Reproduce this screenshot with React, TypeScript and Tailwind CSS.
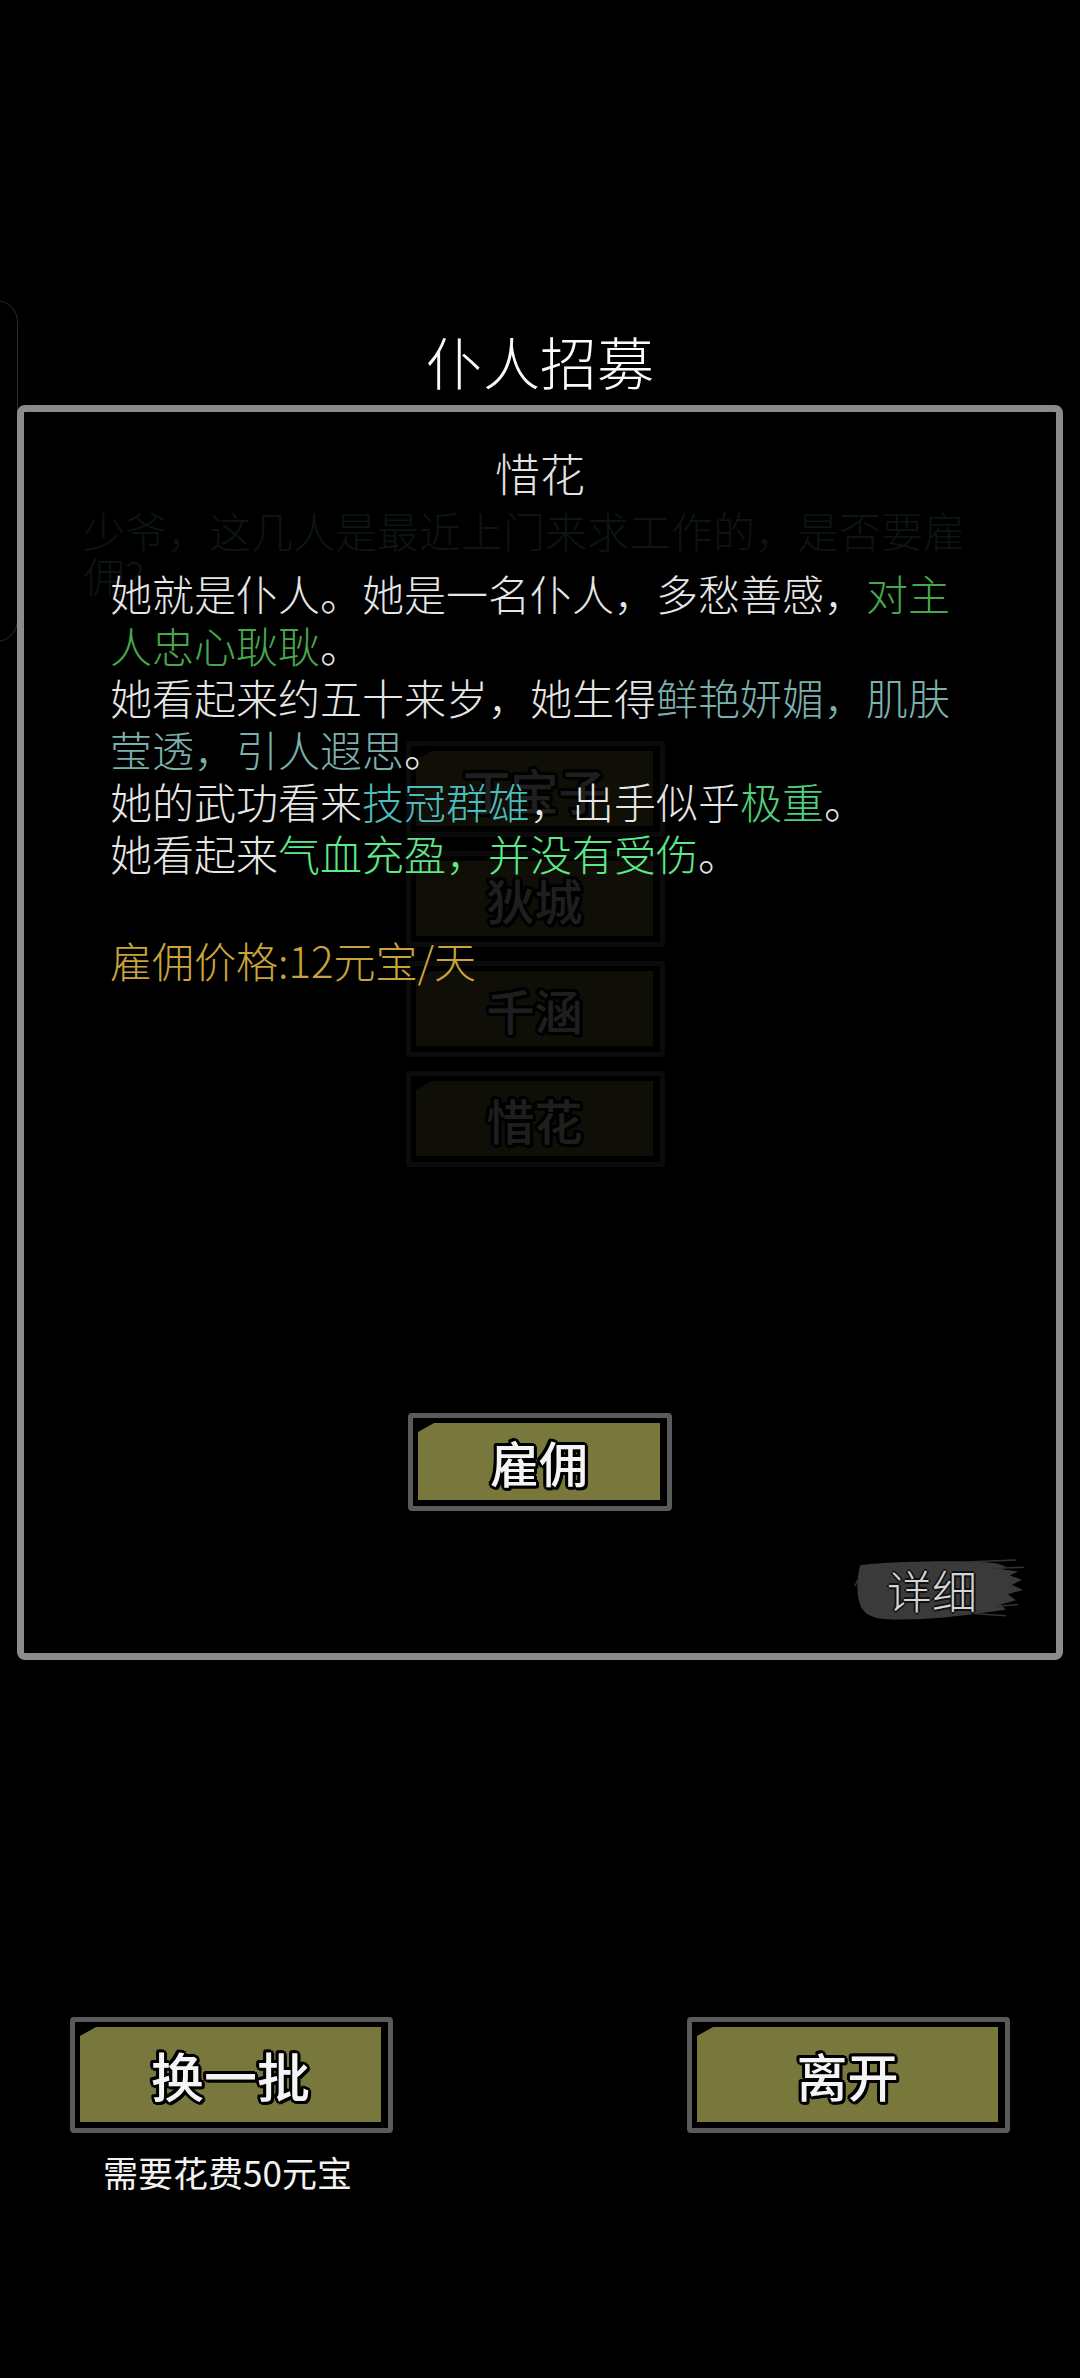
import React from 'react';

const OUTLINE =
  '[text-shadow:3px_0_0_#000,-3px_0_0_#000,0_3px_0_#000,0_-3px_0_#000,2px_2px_0_#000,-2px_-2px_0_#000,2px_-2px_0_#000,-2px_2px_0_#000,3px_2px_0_#000,-3px_-2px_0_#000,2px_3px_0_#000,-2px_-3px_0_#000]';

// Olive game button with the clipped top-left corner
function OliveButton({ label, className, textClass }: { label: string; className: string; textClass: string }) {
  return (
    <div className={`rounded-[4px] border-[5px] border-[#5a5a5a] bg-black pb-[6px] pl-[5px] pr-[7px] pt-[5px] ${className}`}>
      <div className="flex h-full w-full items-center justify-center bg-[#78773c] [clip-path:polygon(16px_0,100%_0,100%_100%,0_100%,0_9px)]">
        <span className={`font-medium text-[#f4f4f4] ${OUTLINE} ${textClass}`}>{label}</span>
      </div>
    </div>
  );
}

// The list dialog sitting behind the detail panel, seen through it
function BehindLayer() {
  return (
    <div className="pointer-events-none absolute inset-0 pl-[59px] pt-[95px]">
      <p className="w-[900px] text-[42px] font-light leading-[45px] text-[#0c1414]">少爷，这几人是最近上门来求工作的，是否要雇佣?</p>
      <div className="ml-[323px] mt-[144px] flex w-[259px] flex-col gap-[14px] opacity-[0.12]">
        {['丁宝子', '狄城', '千涵', '惜花'].map((n) => (
          <OliveButton key={n} label={n} className="h-[96px] w-[259px]" textClass="text-[48px] leading-[60px]" />
        ))}
      </div>
    </div>
  );
}

function BrushButton() {
  return (
    <div className="relative h-[62px] w-[170px]">
      <svg viewBox="0 0 168 60" preserveAspectRatio="none" className="absolute inset-0 h-full w-full">
        <path
          d="M6 6 C40 2 110 1 140 4 L150 7 L146 10 L162 12 L154 16 L166 20 L156 25 L167 30 L152 34 L160 40 L145 44 L150 49 L128 52 C100 56 60 60 30 58 C16 57 9 52 6 44 C2 34 3 18 6 6 Z"
          fill="#3a3a3a"
        />
        <path d="M110 3 L160 1 M135 9 L168 8 M140 46 L162 44 M120 53 L150 55 M4 20 L1 26" stroke="#333" strokeWidth="1.5" fill="none" />
      </svg>
      <div className="relative flex h-full items-center justify-center pr-[14px]">
        <span className="text-[45px] font-light leading-[52px] text-[#d4d4d4] [text-shadow:2px_0_0_#111,-2px_0_0_#111,0_2px_0_#111,0_-2px_0_#111]">详细</span>
      </div>
    </div>
  );
}

export default function App() {
  return (
    <div className="relative min-h-[2378px] w-[1080px] overflow-hidden bg-black pt-[324px] font-['Noto_Sans_CJK_SC',sans-serif]">
      {/* edge of a panel further back */}
      <div className="absolute left-[-120px] top-[300px] h-[342px] w-[138px] rounded-[22px] border border-[#2a2a2a]" />

      <h1 className="relative text-center text-[57px] font-light leading-[72px] text-[#fafafa]">仆人招募</h1>

      <div className="relative mx-[17px] mt-[9px] flex h-[1255px] flex-col rounded-[8px] border-[7px] border-[#8b8b8b] bg-black">
        <BehindLayer />

        <div className="relative flex flex-1 flex-col pb-[32px] pt-[31px]">
          <h2 className="text-center text-[45px] font-light leading-[60px] text-[#e2e2e2]">惜花</h2>

          <div className="mt-[64px] px-[86px] text-[42px] font-light leading-[52px] text-[#e6e6e6]">
            <p>
              她就是仆人。她是一名仆人，多愁善感，<span className="text-[#46a84b]">对主人忠心耿耿</span>。
            </p>
            <p>
              她看起来约五十来岁，她生得<span className="text-[#7cb0ad]">鲜艳妍媚，肌肤莹透，引人遐思</span>。
            </p>
            <p>
              她的武功看来<span className="text-[#4dbcbc]">技冠群雄</span>，出手似乎<span className="text-[#4fd07c]">极重</span>。
            </p>
            <p>
              她看起来<span className="text-[#5de88a]">气血充盈，并没有受伤</span>。
            </p>
            <p className="mt-[55px] text-[#c9a43b]">雇佣价格:12元宝/天</p>
          </div>

          <div className="mt-auto flex justify-center">
            <OliveButton label="雇佣" className="h-[98px] w-[264px]" textClass="text-[49px] leading-[60px]" />
          </div>

          <div className="mt-[48px] flex justify-end pr-[32px]">
            <BrushButton />
          </div>
        </div>
      </div>

      <div className="mt-[357px] flex justify-between px-[70px]">
        <div className="flex w-[323px] flex-col items-center">
          <OliveButton label="换一批" className="h-[116px] w-[323px]" textClass="text-[53px] leading-[64px]" />
          <p className="mt-[16px] pr-[8px] text-[35px] leading-[46px] text-[#f2f2f2]">需要花费50元宝</p>
        </div>
        <OliveButton label="离开" className="h-[116px] w-[323px]" textClass="text-[51px] leading-[64px]" />
      </div>
    </div>
  );
}
